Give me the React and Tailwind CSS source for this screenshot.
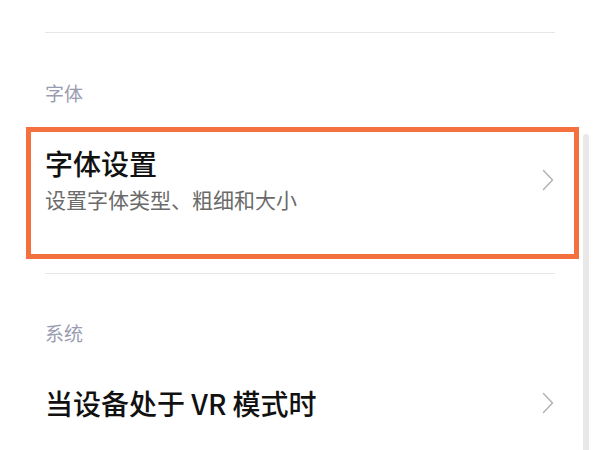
import React from "react";

const Chevron = () => (
  <svg width="12" height="22" viewBox="0 0 12 22" fill="none" className="shrink-0">
    <polyline points="1.5,1.5 10.5,11 1.5,20.5" stroke="#b3b3b3" strokeWidth="1.5" strokeLinecap="round" strokeLinejoin="round" />
  </svg>
);

const App = () => {
  return (
    <div className="relative w-[600px] h-[450px] overflow-hidden bg-white font-['Noto_Sans_CJK_SC','Noto_Sans',sans-serif]">
      {/* top divider */}
      <div className="pt-[32px] px-[45px]">
        <div className="h-px bg-[#e6e6e6]" />
      </div>

      {/* 字体 section */}
      <div className="mt-[49px] pl-[45px] text-[19px] leading-[22px] text-[#9a9cb1]">字体</div>

      <div className="mt-[23px] ml-[26px] mr-[21px] h-[132px] border-[5px] border-[#f4703f] pl-[14px] pr-[20px] pt-[14px]">
        <div className="flex items-center justify-between">
          <div className="flex flex-col">
            <div className="text-[28px] leading-[34px] font-medium text-[#111]">字体设置</div>
            <div className="mt-[5px] text-[21px] leading-[28px] text-[#6a6a6a]">设置字体类型、粗细和大小</div>
          </div>
          <Chevron />
        </div>
      </div>

      <div className="mt-[14px] px-[45px]">
        <div className="h-px bg-[#e6e6e6]" />
      </div>

      {/* 系统 section */}
      <div className="mt-[48px] pl-[45px] text-[19px] leading-[22px] text-[#9a9cb1]">系统</div>

      <div className="mt-[42px] pl-[45px] pr-[46px] flex items-center justify-between">
        <div className="text-[28px] leading-[34px] font-medium text-[#111]">当设备处于 VR 模式时</div>
        <Chevron />
      </div>

      {/* scrollbar */}
      <div className="absolute left-[583px] top-[134px] bottom-0 w-[6px] rounded-t-full bg-[#e8e8e8]" />
    </div>
  );
};

export default App;
